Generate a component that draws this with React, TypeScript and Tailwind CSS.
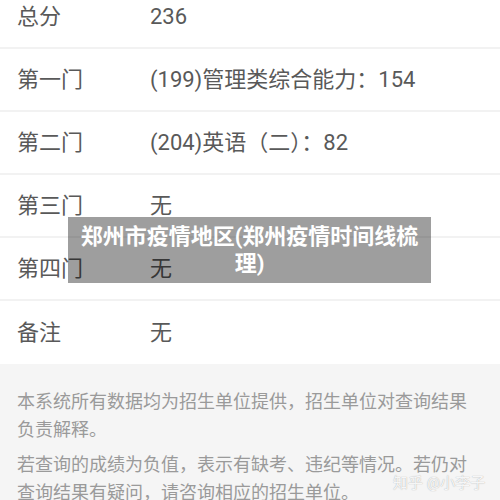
const ROWS: { label: string; value: string }[] = [
  { label: '总分', value: '236' },
  { label: '第一门', value: '(199)管理类综合能力：154' },
  { label: '第二门', value: '(204)英语（二）：82' },
  { label: '第三门', value: '无' },
  { label: '第四门', value: '无' },
  { label: '备注', value: '无' },
]

export default function App() {
  return (
    <div
      className="relative h-[500px] w-[500px] overflow-hidden bg-[#f5f5f5]"
      style={{ fontFamily: 'Roboto, "Noto Sans CJK SC", sans-serif' }}
    >
      <div className="-mt-[14px] bg-white">
        {ROWS.map((row, i) => (
          <div
            key={row.label}
            className={`flex h-[63px] items-center text-[22px] text-[#595959] ${
              i < ROWS.length - 1 ? 'border-b-2 border-[#f2f2f2]' : ''
            }`}
          >
            <span className="w-[150px] shrink-0 pl-[17px]">{row.label}</span>
            <span>{row.value}</span>
          </div>
        ))}
      </div>

      <div className="space-y-[7px] px-[17px] pt-[24px] text-[18px] leading-[28px] text-[#9a9a9a]">
        <p>本系统所有数据均为招生单位提供，招生单位对查询结果负责解释。</p>
        <p>若查询的成绩为负值，表示有缺考、违纪等情况。若仍对查询结果有疑问，请咨询相应的招生单位。</p>
      </div>

      <div className="absolute left-[68px] top-[217px] flex h-[66px] w-[363px] items-center justify-center bg-black/[0.38] px-2 text-center text-[22px] font-bold leading-[27px] text-white">
        郑州市疫情地区(郑州疫情时间线梳理)
      </div>

      <div className="absolute left-[393px] top-[472px] text-[15px] text-white/90 [text-shadow:0_0_1px_#999]">
        知乎 @小李子
      </div>
    </div>
  )
}
